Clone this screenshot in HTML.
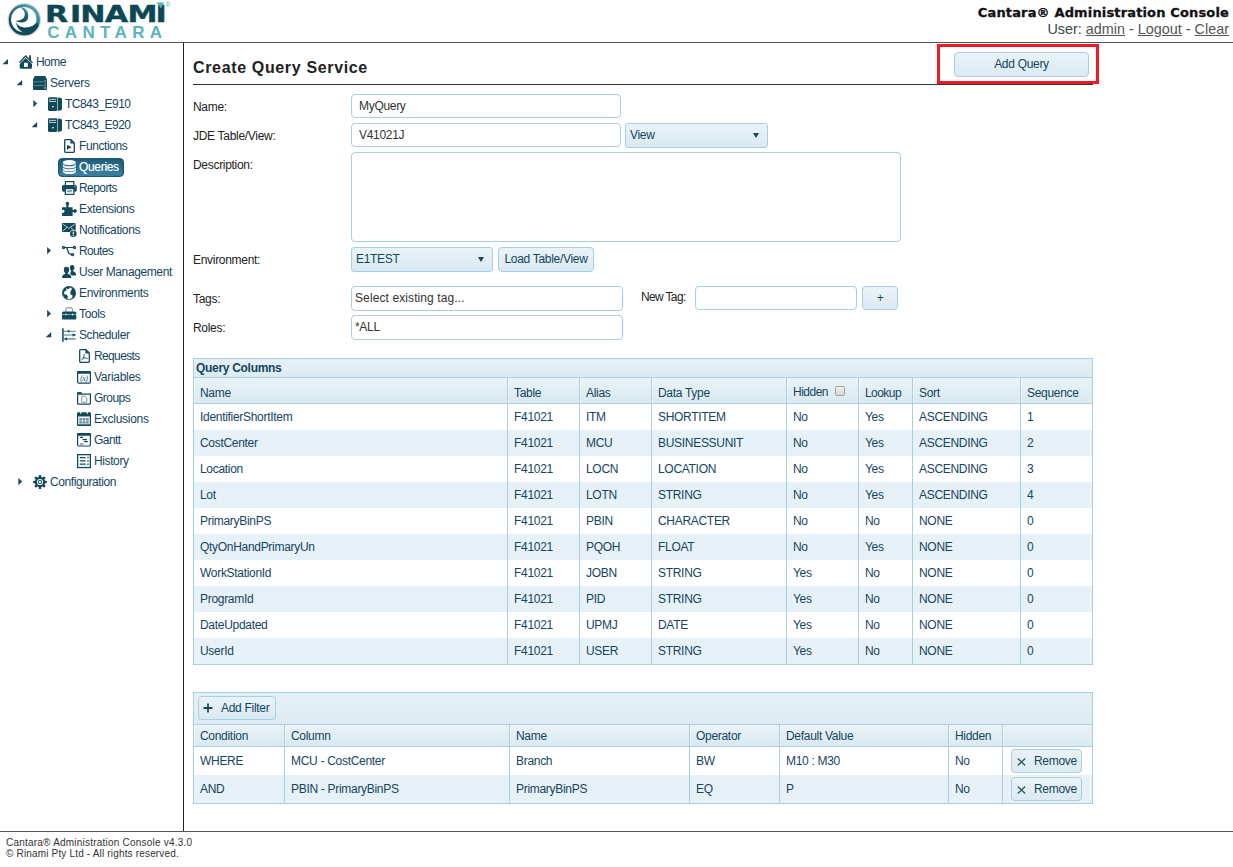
<!DOCTYPE html>
<html lang="en"><head><meta charset="utf-8"><title>Cantara Administration Console</title>
<style>
html,body{margin:0;padding:0}
body{width:1233px;height:867px;position:relative;overflow:hidden;background:#fff;font-family:"Liberation Sans",sans-serif;font-size:12px;color:#222;letter-spacing:-0.3px}
.ab{position:absolute;display:block}
#hline{position:absolute;left:0;top:42px;width:1233px;height:1px;background:#555}
#vline{position:absolute;left:183px;top:43px;width:1px;height:789px;background:#222}
#fline{position:absolute;left:0;top:831px;width:1233px;height:1px;background:#555}
#htitle{position:absolute;right:4px;top:4px;-webkit-text-stroke:0.3px #111;font-family:"DejaVu Sans","Liberation Sans",sans-serif;font-weight:bold;font-size:13px;letter-spacing:0.15px;color:#111;white-space:nowrap;line-height:18px}
#huser{position:absolute;right:4px;top:20px;font-size:14.4px;letter-spacing:0;color:#444;white-space:nowrap;line-height:18px}
#huser u{color:#555}
.tl{position:absolute;line-height:21px;height:21px;white-space:nowrap;color:#15455f}
.tl.sel{color:#fff}
.selbg{position:absolute;box-sizing:border-box;background:linear-gradient(#1f5f7d 0%,#27698a 45%,#3f86a6 100%);border:1px solid #1b5672;border-radius:4px;box-shadow:inset 0 0 2px rgba(10,50,70,.45)}
.tl.sel{text-shadow:0 0 1px rgba(255,255,255,.5)}
#title{position:absolute;left:193px;top:58px;font-size:16px;font-weight:bold;letter-spacing:0.65px;line-height:20px;color:#222;white-space:nowrap}
#tline{position:absolute;left:193px;top:84px;width:900px;height:1px;background:#333}
#redbox{position:absolute;box-sizing:border-box;left:937px;top:44px;width:162px;height:40px;border:3px solid #ed1c24}
.btn{display:inline-block;box-sizing:border-box;border:1px solid #a8cfe3;border-radius:4px;background:linear-gradient(#e9f3f9,#dbeaf3);color:#15455f;text-align:center;white-space:nowrap}
.lbl{position:absolute;left:193px;line-height:14px;white-space:nowrap}
.inp{position:absolute;box-sizing:border-box;border:1px solid #a8cfe3;border-radius:4px;background:#fff;line-height:22px;padding-left:7px;white-space:nowrap;color:#333}
.sel2{position:absolute;box-sizing:border-box;border:1px solid #a8cfe3;border-radius:3px;background:linear-gradient(#eaf3f8,#dae9f2);line-height:22px;padding-left:4px;white-space:nowrap;color:#15455f}
.sel2 i{position:absolute;right:8px;top:9px;width:0;height:0;border-left:3.5px solid transparent;border-right:3.5px solid transparent;border-top:5px solid #17475a}
table.grid{position:absolute;border-collapse:collapse;table-layout:fixed;border:1px solid #a8cfe3}
table.grid td{padding:0 0 0 6px;white-space:nowrap;overflow:hidden;border-left:1px solid #a8cfe3;border-right:1px solid #a8cfe3;color:#15455f}
tr.cap td{height:18px;line-height:18px;font-weight:bold;padding-left:2px !important;background:linear-gradient(#e6f1f7,#dcebf3);border-bottom:1px solid #a8cfe3;color:#15455f}
tr.hd td{height:19px;line-height:19px;padding-top:6px;background:linear-gradient(#e9f3f8,#d9e9f2);border-bottom:1px solid #a8cfe3;color:#15455f}
tr.row td{height:26px;line-height:26px;background:#fff}
tr.alt td{height:26px;line-height:26px;background:#e7f1f8}
tr.hd td{box-shadow:inset 1px 1px 0 rgba(255,255,255,.45)}
tr.fh td{height:19px;line-height:19px;padding-top:2px}
tr.f td{height:28px;line-height:28px}
tr.tb td{height:31px;background:linear-gradient(#e6f1f7,#dcebf3);border-bottom:1px solid #a8cfe3;padding-left:4px !important}
.cb{display:inline-block;width:8px;height:8px;border:1px solid #a3a3a3;border-radius:2px;background:linear-gradient(#f2f2f2,#d6d6d6);vertical-align:0px;margin-left:4px}

.addf{display:block;width:78px;height:24px;line-height:22px;text-align:left;padding-left:4px;margin-top:-1px}
td.rm{padding-left:8px !important}
.rmb{display:block;width:71px;height:24px;line-height:22px;text-align:left;padding-left:5px}
#foot{position:absolute;left:6px;top:837px;font-size:10px;line-height:11px;letter-spacing:0.25px;color:#333;white-space:nowrap}
</style></head><body>
<div id="logo" class="ab" style="left:0;top:0"><svg width="185" height="42" viewBox="0 0 185 42" style="display:block">
<defs>
<linearGradient id="lg1" x1="0.85" y1="0.1" x2="0.2" y2="0.9"><stop offset="0" stop-color="#52adbb"/><stop offset="0.45" stop-color="#1f6c7d"/><stop offset="1" stop-color="#0d4453"/></linearGradient>
<linearGradient id="lg2" x1="0.5" y1="0" x2="0.4" y2="1"><stop offset="0" stop-color="#3f97a7"/><stop offset="0.6" stop-color="#19606f"/><stop offset="1" stop-color="#0f4a59"/></linearGradient>
<radialGradient id="lgs"><stop offset="0.86" stop-color="#9a9a9a" stop-opacity="0.75"/><stop offset="1" stop-color="#bbb" stop-opacity="0"/></radialGradient>
<clipPath id="lcp"><circle cx="24.3" cy="19.7" r="15.4"/></clipPath>
</defs>
<circle cx="24.3" cy="19.9" r="17.6" fill="url(#lgs)"/>
<circle cx="24.3" cy="19.7" r="15.5" fill="url(#lg1)"/>
<circle cx="23.8" cy="19.6" r="12.7" fill="#fff"/>
<path d="M20 7 C24.8 7 28.7 11 28.3 16.6 C28 20.4 25.5 22.6 21.8 22.4 C19.3 22.3 16.8 21.8 15.2 21 C17.8 20.9 20.4 20.5 22.4 19.1 C24.9 17.3 25.4 14 24.2 11.6 C23.3 9.8 21.6 8.3 20 7 Z" fill="url(#lg2)"/>
<path clip-path="url(#lcp)" d="M15.7 21.9 C17.5 25.4 21 27.5 26 27.4 C30.5 27.3 34.5 25.4 36.9 22.3 L39 27 L30 35 L25.5 33.2 C21 32 17.3 28.5 15.7 21.9 Z" fill="#0f4a59"/>
<g transform="scale(1.3,1)"><text x="34.6 53.8 61.8 80.5 98 119.7" y="21.9" font-family="DejaVu Sans, Liberation Sans, sans-serif" font-weight="bold" font-size="23.2" fill="#0d4756" stroke="#0d4756" stroke-width="0.4">RINAMI</text></g>
<path d="M156.6 2.4 H164 L161 8.4 Z" fill="#4fb0bb"/>
<text x="165.6" y="7.2" font-family="Liberation Sans, sans-serif" font-size="6.5" fill="#5ab4be">®</text>
<text x="47.2" y="37.5" font-family="Liberation Sans, sans-serif" font-weight="bold" font-size="17" fill="#5ab4be" letter-spacing="5.35">CANTARA</text>
</svg>
</div>
<div id="htitle">Cantara® Administration Console</div>
<div id="huser">User: <u>admin</u> - <u>Logout</u> - <u>Clear</u></div>
<div id="hline"></div><div id="vline"></div><div id="fline"></div>
<div id="tree">
<svg class="ab" style="left:0;top:51px" width="60" height="21" viewBox="0 0 60 21"><path d="M8.0 8 V13.2 H2.5 Z" fill="#1c4a5c"/></svg>
<svg class="ab" style="left:19px;top:55px;overflow:visible" width="16" height="15" viewBox="0 0 16 15"><path d="M6.7 -0.1 L0 6.9 L1 8 L6.7 2 L13 8.2 L14 7.2 L12 5.2 V0.2 H10.2 V3.4 Z" fill="#134a5a"/><path d="M6.7 2.9 L0.7 8.9 V12.3 Q0.7 13.8 2.2 13.8 H11.5 Q13 13.8 13 12.3 V9.1 Z M5 7.7 V11.9 H8.8 V7.7 Z" fill="#134a5a" fill-rule="evenodd"/></svg>
<span class="tl" style="left:36px;top:52px;letter-spacing:-0.57px">Home</span>
<svg class="ab" style="left:0;top:72px" width="60" height="21" viewBox="0 0 60 21"><path d="M22.1 8 V13.2 H16.6 Z" fill="#1c4a5c"/></svg>
<svg class="ab" style="left:33px;top:76px;overflow:visible" width="16" height="15" viewBox="0 0 16 15"><path d="M1.6 0.1 H12.4 L14 3.4 V13 Q14 13.9 13.1 13.9 H0.9 Q0 13.9 0 13 V3.4 Z" fill="#134a5a"/><path d="M0 5.75 H14 M0 9.55 H14" stroke="#b5cad2" stroke-width="0.45"/><rect x="11.7" y="4.1" width="1" height="0.8" fill="#b5cad2"/><rect x="11.7" y="7.3" width="1" height="0.8" fill="#b5cad2"/><rect x="11.3" y="11.4" width="1.5" height="1.1" fill="#fff"/></svg>
<span class="tl" style="left:50px;top:73px;letter-spacing:-0.22px">Servers</span>
<svg class="ab" style="left:0;top:93px" width="60" height="21" viewBox="0 0 60 21"><path d="M33.3 7 L37.199999999999996 10.6 L33.3 14.2 Z" fill="#1c4a5c"/></svg>
<svg class="ab" style="left:48px;top:97px;overflow:visible" width="16" height="15" viewBox="0 0 16 15"><rect x="0" y="0.3" width="9.3" height="13.6" rx="1.3" fill="#134a5a"/><rect x="1.3" y="1.9" width="6.7" height="0.8" fill="#e6eef1"/><rect x="1.3" y="4" width="6.7" height="0.8" fill="#e6eef1"/><rect x="1.3" y="1.9" width="0.8" height="2.9" fill="#9fb9c2"/><rect x="4.2" y="9" width="1.5" height="1.4" fill="#e6eef1"/><path d="M9.8 0.2 L13 0.9 Q14 1.2 14 2.2 V11.8 Q14 12.8 13 13.2 L9.8 14 Z" fill="#134a5a"/></svg>
<span class="tl" style="left:65px;top:94px;letter-spacing:-0.52px">TC843_E910</span>
<svg class="ab" style="left:0;top:114px" width="60" height="21" viewBox="0 0 60 21"><path d="M37.1 8 V13.2 H31.6 Z" fill="#1c4a5c"/></svg>
<svg class="ab" style="left:48px;top:118px;overflow:visible" width="16" height="15" viewBox="0 0 16 15"><rect x="0" y="0.3" width="9.3" height="13.6" rx="1.3" fill="#134a5a"/><rect x="1.3" y="1.9" width="6.7" height="0.8" fill="#e6eef1"/><rect x="1.3" y="4" width="6.7" height="0.8" fill="#e6eef1"/><rect x="1.3" y="1.9" width="0.8" height="2.9" fill="#9fb9c2"/><rect x="4.2" y="9" width="1.5" height="1.4" fill="#e6eef1"/><path d="M9.8 0.2 L13 0.9 Q14 1.2 14 2.2 V11.8 Q14 12.8 13 13.2 L9.8 14 Z" fill="#134a5a"/></svg>
<span class="tl" style="left:65px;top:115px;letter-spacing:-0.52px">TC843_E920</span>
<svg class="ab" style="left:62px;top:139px;overflow:visible" width="16" height="15" viewBox="0 0 16 15"><path d="M2.7 1.5 Q2.7 0.7 3.5 0.7 H9 L12.3 4 V12.5 Q12.3 13.3 11.5 13.3 H3.5 Q2.7 13.3 2.7 12.5 Z" fill="none" stroke="#134a5a" stroke-width="1.3"/><path d="M8.4 0.7 V4.6 H12.3 Z" fill="#134a5a"/><path d="M5 5.8 L9.6 8.2 L5 10.7 Z" fill="#134a5a"/></svg>
<span class="tl" style="left:79px;top:136px;letter-spacing:-0.42px">Functions</span>
<div class="selbg" style="left:58px;top:158px;width:66px;height:19px"></div>
<svg class="ab" style="left:62px;top:160px;overflow:visible" width="16" height="15" viewBox="0 0 16 15"><ellipse cx="7.4" cy="2.7" rx="6.5" ry="2.6" fill="#fff"/><path d="M0.9 3.7 C0.9 7.1 13.9 7.1 13.9 3.7 V5.7 C13.9 9.1 0.9 9.1 0.9 5.7 Z" fill="#fff"/><path d="M0.9 6.7 C0.9 10.1 13.9 10.1 13.9 6.7 V8.7 C13.9 12.1 0.9 12.1 0.9 8.7 Z" fill="#fff"/><path d="M0.9 9.6 C0.9 13 13.9 13 13.9 9.6 V11.4 C13.9 14.8 0.9 14.8 0.9 11.4 Z" fill="#fff"/></svg>
<span class="tl sel" style="left:79px;top:157px;letter-spacing:-0.32px">Queries</span>
<svg class="ab" style="left:62px;top:181px;overflow:visible" width="16" height="15" viewBox="0 0 16 15"><rect x="3.4" y="0.6" width="8.4" height="4.4" fill="#fff" stroke="#134a5a" stroke-width="1.2"/><rect x="0" y="3.9" width="14.8" height="6.8" rx="1.6" fill="#134a5a"/><rect x="3.3" y="7.6" width="8.6" height="5.8" fill="#fff" stroke="#134a5a" stroke-width="1.2"/><rect x="5" y="9" width="5.2" height="2.3" fill="#8fa9b3"/><rect x="12.2" y="5.1" width="1.2" height="1" fill="#b9cdd4"/></svg>
<span class="tl" style="left:79px;top:178px;letter-spacing:-0.57px">Reports</span>
<svg class="ab" style="left:62px;top:202px;overflow:visible" width="16" height="15" viewBox="0 0 16 15"><path d="M0 5.2 H4.3 V3 A1.8 1.8 0 1 1 6.5 3 V5.2 H10.6 V8 H11.6 A1.8 1.8 0 1 1 11.6 10 H10.6 V13.9 H0 V10.6 A1.6 1.6 0 1 0 0 8 Z" fill="#134a5a"/></svg>
<span class="tl" style="left:79px;top:199px;letter-spacing:-0.34px">Extensions</span>
<svg class="ab" style="left:62px;top:223px;overflow:visible" width="16" height="15" viewBox="0 0 16 15"><rect x="0" y="0" width="13.7" height="9" rx="1" fill="#134a5a"/><path d="M1 1.2 L6.85 5.4 L12.7 1.2 M1 7.8 L5 4.6 M12.7 7.8 L8.7 4.6" fill="none" stroke="#fff" stroke-width="0.7"/><circle cx="11.3" cy="10.8" r="3.9" fill="#fff"/><circle cx="11.3" cy="10.8" r="3.3" fill="#134a5a"/><rect x="10.75" y="8.6" width="1.1" height="2.9" fill="#fff"/><rect x="10.75" y="12.1" width="1.1" height="1.1" fill="#fff"/></svg>
<span class="tl" style="left:79px;top:220px;letter-spacing:-0.32px">Notifications</span>
<svg class="ab" style="left:0;top:240px" width="60" height="21" viewBox="0 0 60 21"><path d="M47.1 7 L51.0 10.6 L47.1 14.2 Z" fill="#1c4a5c"/></svg>
<svg class="ab" style="left:62px;top:244px;overflow:visible" width="16" height="15" viewBox="0 0 16 15"><path d="M2.4 3.5 H11.6" fill="none" stroke="#134a5a" stroke-width="1.05"/><path d="M4.4 3.7 C6.2 4.4 5.4 8.6 7 9.4 L10 10.6" fill="none" stroke="#134a5a" stroke-width="1.3"/><circle cx="1.5" cy="3.5" r="1.1" fill="#6a8f9b" stroke="#134a5a" stroke-width="1.1"/><circle cx="12.5" cy="3.5" r="1.1" fill="#6a8f9b" stroke="#134a5a" stroke-width="1.1"/><circle cx="10.6" cy="10.7" r="1.1" fill="#6a8f9b" stroke="#134a5a" stroke-width="1.1"/></svg>
<span class="tl" style="left:79px;top:241px;letter-spacing:-0.67px">Routes</span>
<svg class="ab" style="left:62px;top:265px;overflow:visible" width="16" height="15" viewBox="0 0 16 15"><ellipse cx="10.1" cy="2.7" rx="2.3" ry="2.7" fill="#134a5a"/><path d="M9.1 5 H11.1 V6.2 C12.8 6.8 14.2 7.4 14.2 10.4 H8 Z" fill="#134a5a"/><ellipse cx="4.5" cy="4.9" rx="3.2" ry="3.6" fill="#fff"/><path d="M-0.5 13.5 C-0.5 9.5 1 9 3 8.3 H6 C8.4 9 10 9.6 10 13.5 Z" fill="#fff"/><ellipse cx="4.5" cy="4.9" rx="2.7" ry="3.1" fill="#134a5a"/><path d="M0 13.1 C0 10.2 1.6 9.5 3.3 8.8 V7.3 H5.7 V8.8 C7.6 9.5 9.4 10.2 9.4 13.1 Z" fill="#134a5a"/></svg>
<span class="tl" style="left:79px;top:262px;letter-spacing:-0.39px">User Management</span>
<svg class="ab" style="left:62px;top:286px;overflow:visible" width="16" height="15" viewBox="0 0 16 15"><circle cx="7" cy="7" r="7" fill="#134a5a"/><path d="M4.4 2.8 L6.2 3.6 L8 1.8 L9.8 2.5 L8.8 4.6 L8 6.3 L8.2 8.4 L10.3 9.6 L9.8 11.9 L7.5 13.1 L5.5 12.7 L6.2 10.4 L4.7 8.6 L2.4 7.9 L2.4 5.8 L4.7 4.6 Z" fill="#fff" stroke="#fff" stroke-width="0.5" stroke-linejoin="round"/><path d="M0.9 8.5 L2 10.5 L1.6 11.2 Z M2.2 11.6 L3.6 12.6 L3 12.9Z" fill="#9db7bf"/></svg>
<span class="tl" style="left:79px;top:283px;letter-spacing:-0.33px">Environments</span>
<svg class="ab" style="left:0;top:303px" width="60" height="21" viewBox="0 0 60 21"><path d="M47.1 7 L51.0 10.6 L47.1 14.2 Z" fill="#1c4a5c"/></svg>
<svg class="ab" style="left:62px;top:307px;overflow:visible" width="16" height="15" viewBox="0 0 16 15"><path d="M3.9 4.6 V2.4 Q3.9 0.8 5.5 0.8 H8.8 Q10.4 0.8 10.4 2.4 V4.6" fill="none" stroke="#55808e" stroke-width="1"/><path d="M1.3 4.4 H13 L14.3 5.6 V7.5 H0 V5.6 Z" fill="#134a5a"/><path d="M0 8 H14.3 V11.6 Q14.3 12.6 13.3 12.6 H1 Q0 12.6 0 11.6 Z" fill="#134a5a"/><rect x="3.3" y="6.7" width="1.1" height="1.6" fill="#e6eef1"/><rect x="10" y="6.7" width="1.1" height="1.6" fill="#e6eef1"/></svg>
<span class="tl" style="left:79px;top:304px;letter-spacing:-0.35px">Tools</span>
<svg class="ab" style="left:0;top:324px" width="60" height="21" viewBox="0 0 60 21"><path d="M51.2 8 V13.2 H45.7 Z" fill="#1c4a5c"/></svg>
<svg class="ab" style="left:62px;top:328px;overflow:visible" width="16" height="15" viewBox="0 0 16 15"><rect x="0" y="0.4" width="1.8" height="13.4" fill="#2f6272"/><path d="M1.8 3.2 H13.8 M1.8 7 H13.8 M1.8 10.9 H13.8" stroke="#4d7886" stroke-width="1.1"/><path d="M4.8 3.2 L7.4 1.7 V4.7Z M13.8 7 L10.6 5.2 V8.8Z M2.2 10.9 L5 9.3 V12.5Z" fill="#134a5a"/></svg>
<span class="tl" style="left:79px;top:325px;letter-spacing:-0.39px">Scheduler</span>
<svg class="ab" style="left:77px;top:349px;overflow:visible" width="16" height="15" viewBox="0 0 16 15"><path d="M2.7 1.5 Q2.7 0.7 3.5 0.7 H9 L12.3 4 V12.5 Q12.3 13.3 11.5 13.3 H3.5 Q2.7 13.3 2.7 12.5 Z" fill="none" stroke="#134a5a" stroke-width="1.3"/><path d="M8.4 0.7 V4.6 H12.3 Z" fill="#134a5a"/><path d="M7 5 C7.7 6.6 7 8.4 4.6 11.2 M5.6 9.4 C7.6 8.6 9.4 8.8 10.8 9.8" fill="none" stroke="#134a5a" stroke-width="0.9"/></svg>
<span class="tl" style="left:94px;top:346px;letter-spacing:-0.64px">Requests</span>
<svg class="ab" style="left:77px;top:370px;overflow:visible" width="16" height="15" viewBox="0 0 16 15"><rect x="0.6" y="1.7" width="12.8" height="11.4" rx="1" fill="#fff" stroke="#134a5a" stroke-width="1.2"/><rect x="0.2" y="1.1" width="13.6" height="2.6" rx="0.8" fill="#134a5a"/><text x="7" y="10.6" font-size="7.5" font-family="Liberation Serif, serif" font-style="italic" font-weight="bold" text-anchor="middle" fill="#4d7886">(x)</text></svg>
<span class="tl" style="left:94px;top:367px;letter-spacing:-0.29px">Variables</span>
<svg class="ab" style="left:77px;top:391px;overflow:visible" width="16" height="15" viewBox="0 0 16 15"><path d="M0.6 3.2 H13.4 V12.4 Q13.4 13.2 12.6 13.2 H1.4 Q0.6 13.2 0.6 12.4 Z" fill="#fff" stroke="#134a5a" stroke-width="1.2"/><path d="M0 3.4 V1.9 Q0 1 0.9 1 H4.2 L5.6 2.8 H0.6Z" fill="#134a5a"/><path d="M4.8 5.2 H8 L9.8 7 V11.2 H4.8Z" fill="none" stroke="#7d9ca7" stroke-width="1"/></svg>
<span class="tl" style="left:94px;top:388px;letter-spacing:-0.53px">Groups</span>
<svg class="ab" style="left:77px;top:412px;overflow:visible" width="16" height="15" viewBox="0 0 16 15"><rect x="0.6" y="1" width="12.8" height="12.4" rx="1" fill="#fff" stroke="#134a5a" stroke-width="1.2"/><rect x="0" y="0.4" width="14" height="4" rx="0.8" fill="#134a5a"/><rect x="3" y="0" width="1.3" height="1.6" fill="#fff"/><rect x="9.7" y="0" width="1.3" height="1.6" fill="#fff"/><rect x="2.3" y="6" width="9.4" height="5.6" fill="#6f929f"/><path d="M2.3 8.8 H11.7 M5.4 6 V11.6 M8.6 6 V11.6" stroke="#e6eef1" stroke-width="0.7"/><rect x="0.4" y="12.4" width="13.2" height="1.5" fill="#134a5a"/></svg>
<span class="tl" style="left:94px;top:409px;letter-spacing:-0.26px">Exclusions</span>
<svg class="ab" style="left:77px;top:433px;overflow:visible" width="16" height="15" viewBox="0 0 16 15"><rect x="0.6" y="0.6" width="12.8" height="12.4" rx="1.2" fill="#fff" stroke="#134a5a" stroke-width="1.2"/><rect x="0.2" y="0.1" width="13.6" height="2.6" rx="0.9" fill="#134a5a"/><path d="M3 4.4 H6 M5.4 6.6 H9.9 M7.2 8.7 H10.9" stroke="#134a5a" stroke-width="1.2"/><path d="M2.9 11 H6.5" stroke="#55808e" stroke-width="1.2"/></svg>
<span class="tl" style="left:94px;top:430px;letter-spacing:-0.56px">Gantt</span>
<svg class="ab" style="left:77px;top:454px;overflow:visible" width="16" height="15" viewBox="0 0 16 15"><rect x="0.65" y="0.65" width="12.7" height="12.9" fill="#fff" stroke="#134a5a" stroke-width="1.3"/><path d="M2.8 3.6 H8.6 M2.8 6.9 H8.6 M2.8 10.2 H8.6" stroke="#134a5a" stroke-width="1.3"/><path d="M10.3 3.6 H11.6 M10.3 6.9 H11.6 M10.3 10.2 H11.6" stroke="#134a5a" stroke-width="1.5"/></svg>
<span class="tl" style="left:94px;top:451px;letter-spacing:-0.39px">History</span>
<svg class="ab" style="left:0;top:471px" width="60" height="21" viewBox="0 0 60 21"><path d="M18.3 7 L22.2 10.6 L18.3 14.2 Z" fill="#1c4a5c"/></svg>
<svg class="ab" style="left:33px;top:475px;overflow:visible" width="16" height="15" viewBox="0 0 16 15"><path d="M5.76 1.95 L5.88 0.09 L8.12 0.09 L8.24 1.95 L9.70 2.55 L11.10 1.32 L12.68 2.90 L11.45 4.30 L12.05 5.76 L13.91 5.88 L13.91 8.12 L12.05 8.24 L11.45 9.70 L12.68 11.10 L11.10 12.68 L9.70 11.45 L8.24 12.05 L8.12 13.91 L5.88 13.91 L5.76 12.05 L4.30 11.45 L2.90 12.68 L1.32 11.10 L2.55 9.70 L1.95 8.24 L0.09 8.12 L0.09 5.88 L1.95 5.76 L2.55 4.30 L1.32 2.90 L2.90 1.32 L4.30 2.55Z M7 3.9 A3.1 3.1 0 1 0 7 10.1 A3.1 3.1 0 1 0 7 3.9Z" fill="#134a5a" fill-rule="evenodd"/><circle cx="7" cy="7" r="1.75" fill="none" stroke="#134a5a" stroke-width="1"/></svg>
<span class="tl" style="left:50px;top:472px;letter-spacing:-0.42px">Configuration</span>
</div>
<div id="title">Create Query Service</div>
<div id="tline"></div>
<div id="redbox"></div>
<span class="btn ab" style="left:954px;top:52px;width:135px;height:25px;line-height:23px">Add Query</span>

<span class="lbl" style="top:100px">Name:</span>
<span class="lbl" style="top:129px">JDE Table/View:</span>
<span class="lbl" style="top:158px">Description:</span>
<span class="lbl" style="top:253px">Environment:</span>
<span class="lbl" style="top:292px">Tags:</span>
<span class="lbl" style="top:321px">Roles:</span>
<span class="lbl" style="left:641px;top:290px;letter-spacing:-0.65px">New Tag:</span>

<div class="inp" style="left:351px;top:94px;width:270px;height:24px">MyQuery</div>
<div class="inp" style="left:351px;top:123px;width:270px;height:24px">V41021J</div>
<div class="sel2" style="left:625px;top:123px;width:143px;height:25px">View<i></i></div>
<div class="inp" style="left:351px;top:152px;width:550px;height:90px"></div>
<div class="sel2" style="left:351px;top:247px;width:142px;height:25px">E1TEST<i></i></div>
<span class="btn ab" style="left:498px;top:247px;width:96px;height:25px;line-height:23px">Load Table/View</span>
<div class="inp" style="left:351px;top:286px;width:272px;height:25px;padding-left:3px;letter-spacing:0.1px">Select existing tag...</div>
<div class="inp" style="left:695px;top:286px;width:162px;height:24px"></div>
<span class="btn ab" style="left:862px;top:286px;width:36px;height:24px;line-height:22px">+</span>
<div class="inp" style="left:351px;top:315px;width:272px;height:25px;padding-left:3px">*ALL</div>

<table class="grid" id="qc" style="left:193px;top:358px;width:900px"><colgroup><col style="width:314px"><col style="width:72px"><col style="width:72px"><col style="width:135px"><col style="width:72px"><col style="width:54px"><col style="width:108px"><col style="width:72px"></colgroup>
<tr class="cap"><td colspan="8">Query Columns</td></tr>
<tr class="hd"><td>Name</td><td>Table</td><td>Alias</td><td>Data Type</td><td><span style="position:relative;top:-1px;letter-spacing:-0.5px">Hidden <span class="cb"></span></span></td><td style="letter-spacing:-0.55px">Lookup</td><td>Sort</td><td>Sequence</td></tr>
<tr class="row"><td>IdentifierShortItem</td><td>F41021</td><td>ITM</td><td>SHORTITEM</td><td>No</td><td>Yes</td><td>ASCENDING</td><td>1</td></tr>
<tr class="alt"><td>CostCenter</td><td>F41021</td><td>MCU</td><td>BUSINESSUNIT</td><td>No</td><td>Yes</td><td>ASCENDING</td><td>2</td></tr>
<tr class="row"><td>Location</td><td>F41021</td><td>LOCN</td><td>LOCATION</td><td>No</td><td>Yes</td><td>ASCENDING</td><td>3</td></tr>
<tr class="alt"><td>Lot</td><td>F41021</td><td>LOTN</td><td>STRING</td><td>No</td><td>Yes</td><td>ASCENDING</td><td>4</td></tr>
<tr class="row"><td>PrimaryBinPS</td><td>F41021</td><td>PBIN</td><td>CHARACTER</td><td>No</td><td>No</td><td>NONE</td><td>0</td></tr>
<tr class="alt"><td>QtyOnHandPrimaryUn</td><td>F41021</td><td>PQOH</td><td>FLOAT</td><td>No</td><td>Yes</td><td>NONE</td><td>0</td></tr>
<tr class="row"><td>WorkStationId</td><td>F41021</td><td>JOBN</td><td>STRING</td><td>Yes</td><td>No</td><td>NONE</td><td>0</td></tr>
<tr class="alt"><td>ProgramId</td><td>F41021</td><td>PID</td><td>STRING</td><td>Yes</td><td>No</td><td>NONE</td><td>0</td></tr>
<tr class="row"><td>DateUpdated</td><td>F41021</td><td>UPMJ</td><td>DATE</td><td>Yes</td><td>No</td><td>NONE</td><td>0</td></tr>
<tr class="alt"><td>UserId</td><td>F41021</td><td>USER</td><td>STRING</td><td>Yes</td><td>No</td><td>NONE</td><td>0</td></tr>
</table>
<table class="grid" id="ft" style="left:193px;top:692px;width:900px"><colgroup><col style="width:91px"><col style="width:225px"><col style="width:180px"><col style="width:90px"><col style="width:169px"><col style="width:54px"><col style="width:90px"></colgroup>
<tr class="tb"><td colspan="7"><span class="btn addf"><svg width="10" height="10" viewBox="0 0 10 10" style="vertical-align:-1px;margin-right:8px"><path d="M5 0.5 V9.5 M0.5 5 H9.5" stroke="#1c4a5c" stroke-width="1.8"/></svg>Add Filter</span></td></tr>
<tr class="hd fh"><td>Condition</td><td>Column</td><td>Name</td><td>Operator</td><td>Default Value</td><td>Hidden</td><td></td></tr>
<tr class="row f"><td>WHERE</td><td>MCU - CostCenter</td><td>Branch</td><td>BW</td><td>M10 : M30</td><td>No</td><td class="rm"><span class="btn rmb"><svg width="9" height="8" viewBox="0 0 9 8" style="vertical-align:-1px;margin-right:8px"><path d="M0.8 0.6 L8.2 7.4 M8.2 0.6 L0.8 7.4" stroke="#2f5868" stroke-width="1.35" fill="none"/></svg>Remove</span></td></tr>
<tr class="alt f"><td>AND</td><td>PBIN - PrimaryBinPS</td><td>PrimaryBinPS</td><td>EQ</td><td>P</td><td>No</td><td class="rm"><span class="btn rmb"><svg width="9" height="8" viewBox="0 0 9 8" style="vertical-align:-1px;margin-right:8px"><path d="M0.8 0.6 L8.2 7.4 M8.2 0.6 L0.8 7.4" stroke="#2f5868" stroke-width="1.35" fill="none"/></svg>Remove</span></td></tr>
</table>
<div id="foot"><span style="letter-spacing:0.22px">Cantara® Administration Console v4.3.0</span><br><span style="letter-spacing:0.17px">© Rinami Pty Ltd - All rights reserved.</span></div>
</body></html>
